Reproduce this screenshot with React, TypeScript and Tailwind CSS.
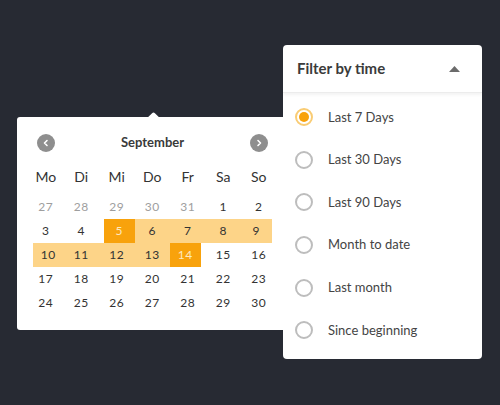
import React from "react";

const weekdays = ["Mo", "Di", "Mi", "Do", "Fr", "Sa", "So"];

type Day = { n: number; muted?: boolean };

const days: Day[] = [
  ...[27, 28, 29, 30, 31].map((n) => ({ n, muted: true })),
  ...Array.from({ length: 30 }, (_, i) => ({ n: i + 1 })),
];

const options = [
  "Last 7 Days",
  "Last 30 Days",
  "Last 90 Days",
  "Month to date",
  "Last month",
  "Since beginning",
];

function Chevron({ dir }: { dir: "left" | "right" }) {
  return (
    <div className="w-[18px] h-[18px] rounded-full bg-[#8e8e8e] flex items-center justify-center">
      <svg width="8" height="8" viewBox="0 0 8 8" fill="none">
        {dir === "left" ? (
          <path d="M5 1.5 2.5 4 5 6.5" stroke="white" strokeWidth="1.6" strokeLinecap="round" strokeLinejoin="round" />
        ) : (
          <path d="M3 1.5 5.5 4 3 6.5" stroke="white" strokeWidth="1.6" strokeLinecap="round" strokeLinejoin="round" />
        )}
      </svg>
    </div>
  );
}

function DayCell({ day, index }: { day: Day; index: number }) {
  const col = index % 7;
  const inRange = !day.muted && day.n >= 5 && day.n <= 14;
  const selected = !day.muted && (day.n === 5 || day.n === 14);
  const segStart = inRange && (day.n === 5 || col === 0);
  const segEnd = inRange && (day.n === 14 || col === 6);

  let tone = "text-[#333]";
  if (day.muted) tone = "text-[#9e9e9e]";
  if (inRange) tone = "bg-[#fdd488] text-[#333]";
  if (selected) tone = "bg-[#f8a20c] text-[#fde9c0]";

  return (
    <div className="h-[24px] flex">
      <div
        className={`flex-1 flex items-center justify-center ${tone} ${segStart ? "ml-[5px]" : ""} ${
          segEnd ? "mr-[5px]" : ""
        }`}
      >
        <span className="text-[12px] tracking-[0.5px]">{day.n}</span>
      </div>
    </div>
  );
}

function Calendar() {
  return (
    <div className="absolute left-[17px] top-[117px] w-[272px] h-[213px] bg-white rounded-[3px]">
      <div className="absolute left-[131px] -top-[3px] w-[11px] h-[11px] bg-white rotate-45 rounded-[2px]" />
      <div className="relative mt-[17px] ml-[20px] w-[231px] h-[18px] flex items-center justify-between">
        <Chevron dir="left" />
        <span className="text-[13px] font-bold text-[#3a3a3a]">September</span>
        <Chevron dir="right" />
      </div>
      <div className="ml-[11px] mt-[14px] w-[248.5px] grid grid-cols-7 h-[20px] items-center">
        {weekdays.map((w) => (
          <span key={w} className="text-center text-[14px] text-[#333]">
            {w}
          </span>
        ))}
      </div>
      <div className="ml-[11px] mt-[9px] w-[248.5px] grid grid-cols-7">
        {days.map((d, i) => (
          <DayCell key={i} day={d} index={i} />
        ))}
      </div>
    </div>
  );
}

function Filter() {
  return (
    <div className="absolute left-[283px] top-[45px] w-[199px] h-[314px] bg-white rounded-[4px] overflow-hidden">
      <div className="h-[48px] flex items-center justify-between pl-[14px] pr-[22px] border-b border-[#ececec] shadow-[0_2px_3px_rgba(0,0,0,0.05)]">
        <span className="text-[15px] font-bold text-[#3b3b3b]">Filter by time</span>
        <svg width="11" height="6" viewBox="0 0 11 6">
          <path d="M5.5 0 11 6H0z" fill="#6b6b6b" />
        </svg>
      </div>
      <div className="pt-[3px]">
        {options.map((o, i) => (
          <div key={o} className="h-[42.6px] flex items-center pl-[12px] gap-[15px]">
            {i === 0 ? (
              <div className="w-[18px] h-[18px] rounded-full border-2 border-[#f9cc74] flex items-center justify-center">
                <div className="w-[10px] h-[10px] rounded-full bg-[#f8a20c]" />
              </div>
            ) : (
              <div className="w-[18px] h-[18px] rounded-full border-2 border-[#bdbdbd]" />
            )}
            <span className="text-[13px] text-[#444]">{o}</span>
          </div>
        ))}
      </div>
    </div>
  );
}

export default function App() {
  return (
    <div
      className="relative w-[500px] h-[405px] bg-[#272a33] overflow-hidden"
      style={{ fontFamily: "Lato, 'Noto Sans', sans-serif" }}
    >
      <Calendar />
      <Filter />
    </div>
  );
}
